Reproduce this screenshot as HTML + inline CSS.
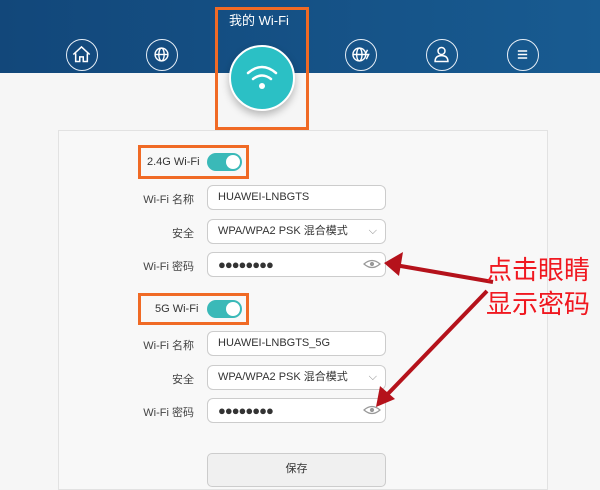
<!DOCTYPE html>
<html><head><meta charset="utf-8"><style>
body{margin:0;width:600px;height:487px;overflow:hidden;background:#f6f6f6;font-family:"Liberation Sans","Noto Sans CJK SC",sans-serif;position:relative}
.hdr{position:absolute;left:0;top:0;width:600px;height:73px;background:linear-gradient(90deg,#12477a,#185b91)}
.ic{position:absolute;top:39px;width:32px;height:32px;border:1.5px solid #e6eef6;border-radius:50%;box-sizing:border-box}
.ic svg{position:absolute;left:4px;top:4px}
.card{position:absolute;left:58px;top:130px;width:490px;height:360px;background:#f8f8f8;border:1px solid #e2e2e2;box-sizing:border-box}
.ob{position:absolute;border:3px solid #f06a25;box-sizing:border-box}
.lbl{position:absolute;font-size:11px;color:#444;text-align:right;width:90px;left:104px}
.in{position:absolute;left:207px;width:179px;height:25px;background:#fff;border:1px solid #ccc;border-radius:6px;box-sizing:border-box;font-size:11px;color:#333;padding:0 0 0 10px;line-height:23px}
.tg{position:absolute;left:207px;width:35px;height:18px;background:#3ab9b8;border-radius:9px}
.tg:after{content:"";position:absolute;right:2px;top:2px;width:14px;height:14px;border-radius:50%;background:#fff}
.red{position:absolute;left:486px;color:#f01820;font-size:26px;letter-spacing:0px}
</style></head><body>
<div class="hdr"></div>
<div style="position:absolute;left:229px;top:10px;color:#fff;font-size:13px">我的 Wi-Fi</div>
<div class="ic" style="left:66px"><svg width="21" height="21" viewBox="0 0 18 18" fill="none" stroke="#fff" stroke-width="1.3"><path d="M2 9 9 2.5 16 9M4 8v7h3.5v-4h3v4H14V8"/></svg></div>
<div class="ic" style="left:146px"><svg width="21" height="21" viewBox="0 0 18 18" fill="none" stroke="#fff" stroke-width="1.2"><circle cx="9" cy="9" r="5.5"/><ellipse cx="9" cy="9" rx="2.3" ry="5.5"/><path d="M3.5 9h11"/></svg></div>
<div class="ic" style="left:345px"><svg width="21" height="21" viewBox="0 0 18 18" fill="none" stroke="#fff" stroke-width="1.2"><circle cx="8" cy="9" r="5.5"/><ellipse cx="8" cy="9" rx="2.3" ry="5.5"/><path d="M2.5 9h11M15 5l-2 4h3l-2 4"/></svg></div>
<div class="ic" style="left:426px"><svg width="21" height="21" viewBox="0 0 18 18" fill="none" stroke="#fff" stroke-width="1.3"><circle cx="9" cy="6" r="3"/><path d="M3.5 15c0-4 2.5-5 5.5-5s5.5 1 5.5 5z"/></svg></div>
<div class="ic" style="left:507px"><svg width="21" height="21" viewBox="0 0 18 18" fill="none" stroke="#fff" stroke-width="1.3"><path d="M5 6h8M5 9h8M5 12h8"/></svg></div>
<div class="card"></div>
<div class="ob" style="left:215px;top:7px;width:94px;height:123px"></div>
<div style="position:absolute;left:229px;top:45px;width:66px;height:66px;border-radius:50%;background:#2bc0c5;border:2px solid #fff;box-sizing:border-box;box-shadow:0 4px 8px rgba(0,0,0,.25)">
<svg width="62" height="62" viewBox="0 0 62 62" fill="none" stroke="#fff" stroke-width="2.5" stroke-linecap="round"><path d="M17 26q14-12 28 0M22 32q9-7 18 0"/><circle cx="31" cy="39" r="3" fill="#fff" stroke="none"/></svg></div>

<div class="ob" style="left:138px;top:145px;width:111px;height:34px"></div>
<div style="position:absolute;left:147px;top:156px;font-size:11px;color:#333">2.4G Wi-Fi</div>
<div class="tg" style="top:153px"></div>
<div class="lbl" style="top:191px">Wi-Fi 名称</div><div class="in" style="top:185px">HUAWEI-LNBGTS</div>
<div class="lbl" style="top:225px">安全</div><div class="in" style="top:219px">WPA/WPA2 PSK 混合模式<span style="position:absolute;right:8px;top:0;color:#888">⌵</span></div>
<div class="lbl" style="top:258px">Wi-Fi 密码</div><div class="in" style="top:252px;font-size:13px;letter-spacing:-1px">●●●●●●●●</div>

<div class="ob" style="left:138px;top:293px;width:111px;height:32px"></div>
<div style="position:absolute;left:155px;top:303px;font-size:11px;color:#333">5G Wi-Fi</div>
<div class="tg" style="top:300px"></div>
<div class="lbl" style="top:337px">Wi-Fi 名称</div><div class="in" style="top:331px">HUAWEI-LNBGTS_5G</div>
<div class="lbl" style="top:371px">安全</div><div class="in" style="top:365px">WPA/WPA2 PSK 混合模式<span style="position:absolute;right:8px;top:0;color:#888">⌵</span></div>
<div class="lbl" style="top:404px">Wi-Fi 密码</div><div class="in" style="top:398px;font-size:13px;letter-spacing:-1px">●●●●●●●●</div>
<div style="position:absolute;left:207px;top:453px;width:179px;height:34px;background:#f0f0f0;border:1px solid #ccc;border-radius:5px;box-sizing:border-box;text-align:center;font-size:11px;color:#333;line-height:30px">保存</div>

<svg style="position:absolute;left:0;top:0" width="600" height="487">
<g fill="none" stroke="#999" stroke-width="1.2"><path d="M364 264q8-7 16 0q-8 7-16 0z"/><circle cx="372" cy="264" r="1.5" fill="#999"/><path d="M364 410q8-7 16 0q-8 7-16 0z"/><circle cx="372" cy="410" r="1.5" fill="#999"/></g>
<g stroke="#b5121b" stroke-width="4" fill="#b5121b"><path d="M493 282 395 265"/><path d="M487 291 382 400"/></g>
<path d="M384 263 403 252 399 276z" fill="#b5121b"/><path d="M376 407 380 386 395 399z" fill="#b5121b"/>
</svg>
<div class="red" style="top:250px">点击眼睛</div>
<div class="red" style="top:284px">显示密码</div>
</body></html>
